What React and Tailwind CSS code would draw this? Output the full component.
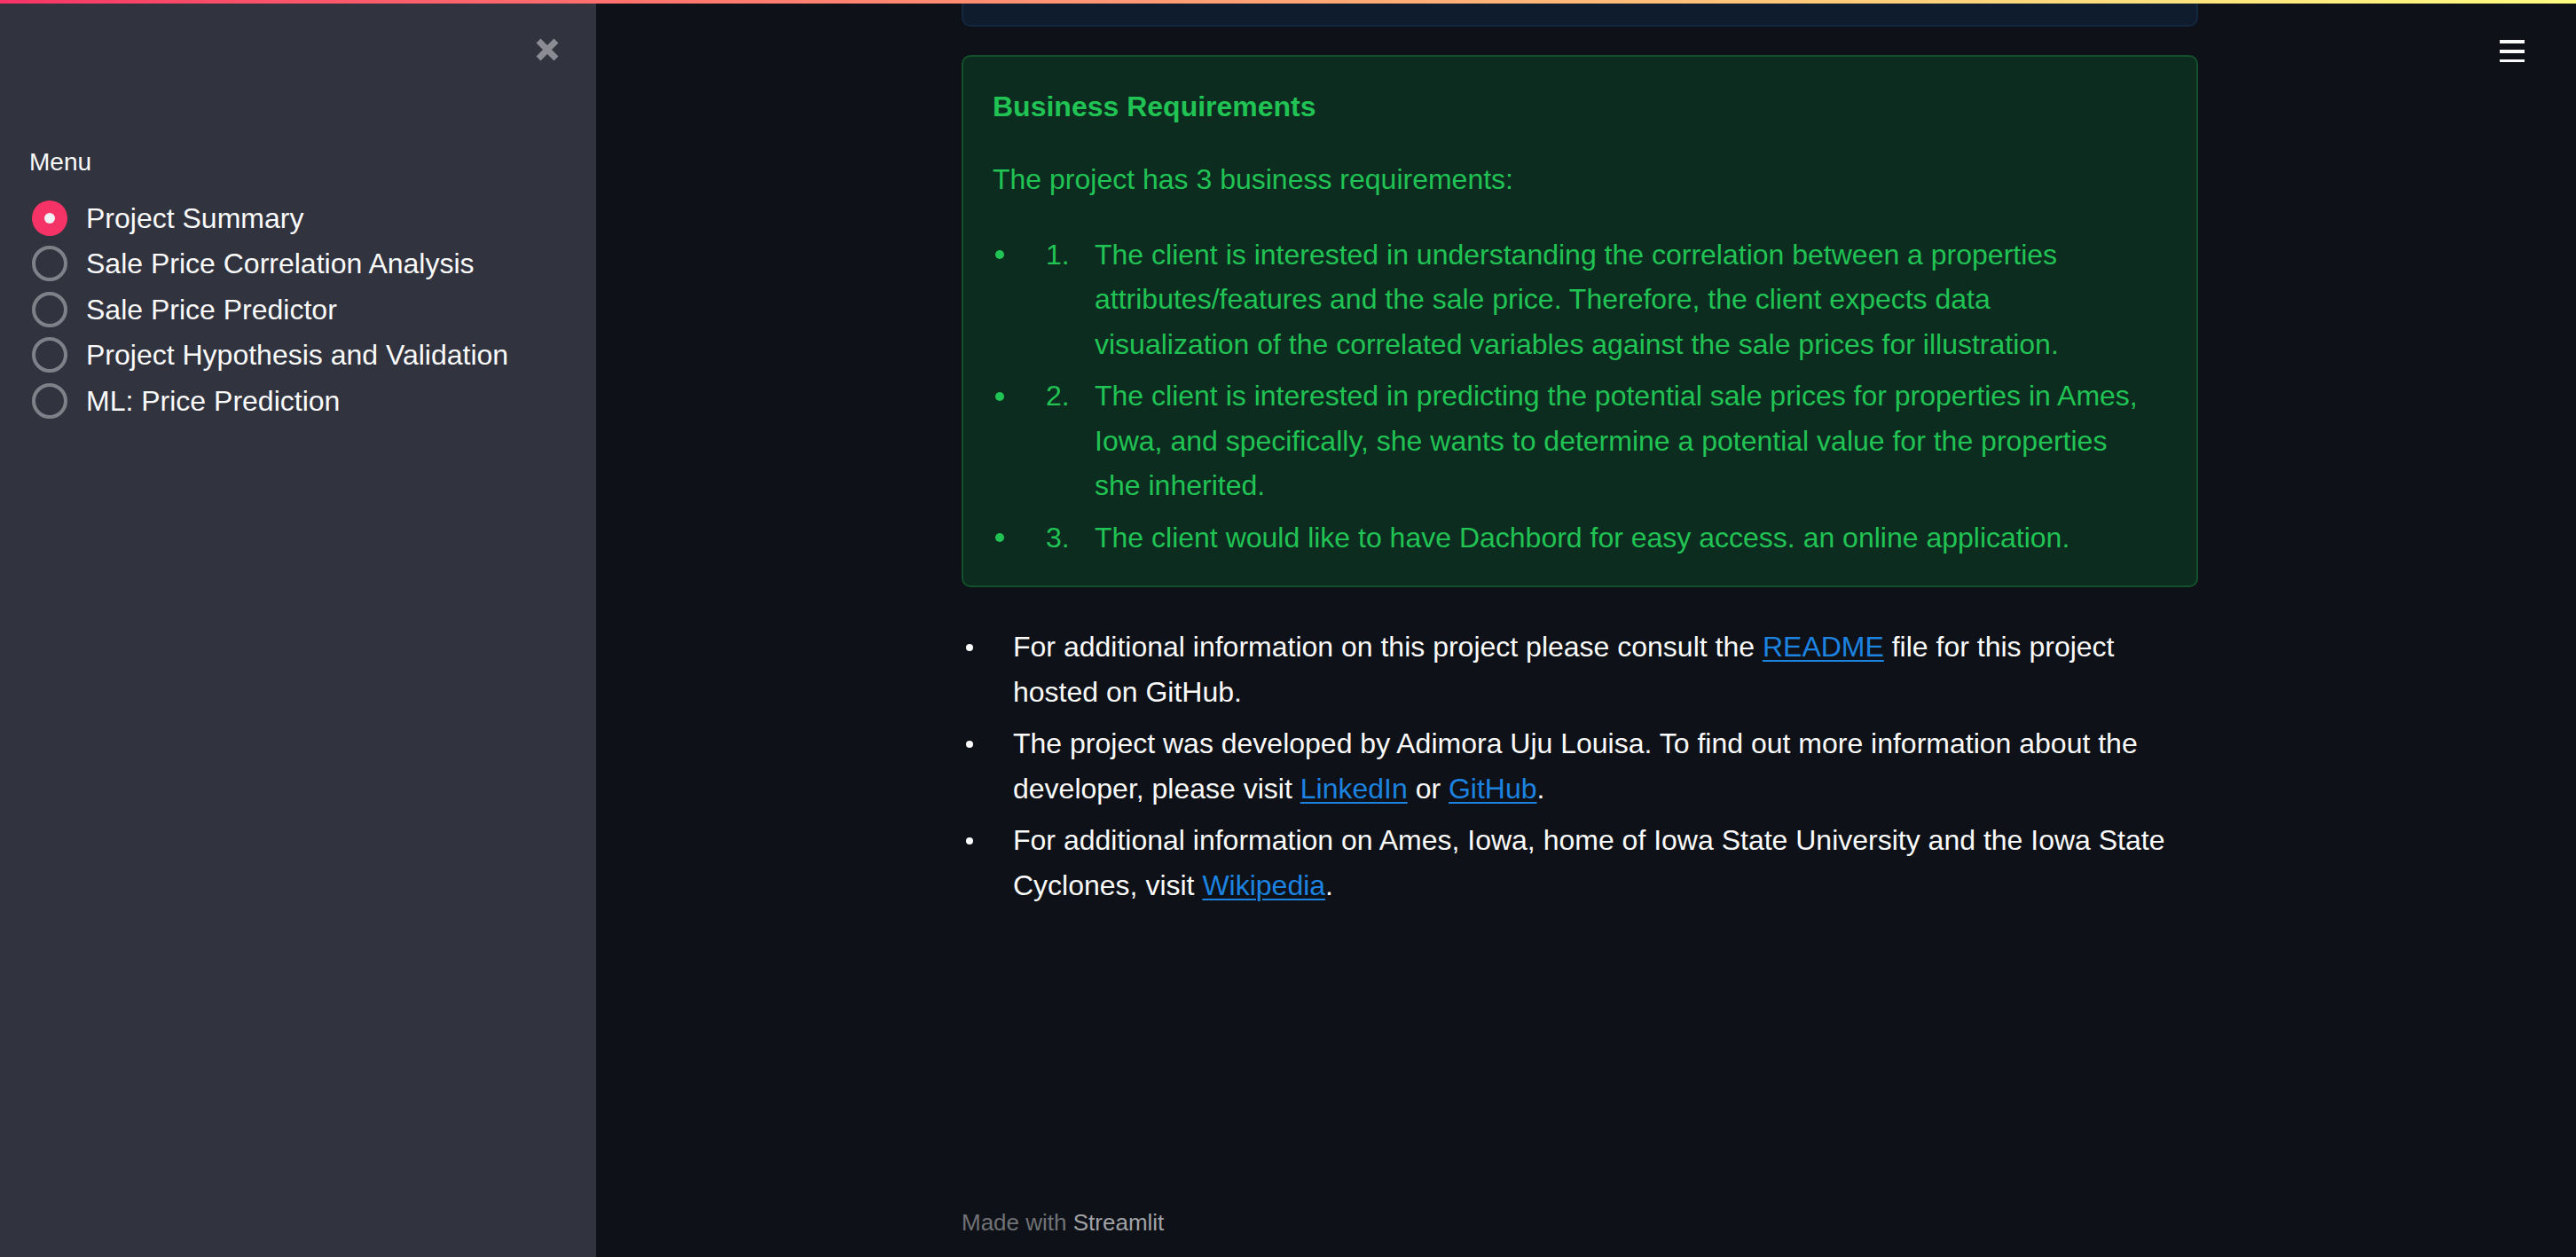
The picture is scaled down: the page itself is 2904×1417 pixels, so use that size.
import React from "react";

const menuItems = [
  "Project Summary",
  "Sale Price Correlation Analysis",
  "Sale Price Predictor",
  "Project Hypothesis and Validation",
  "ML: Price Prediction",
];

const requirements = [
  "The client is interested in understanding the correlation between a properties attributes/features and the sale price. Therefore, the client expects data visualization of the correlated variables against the sale prices for illustration.",
  "The client is interested in predicting the potential sale prices for properties in Ames, Iowa, and specifically, she wants to determine a potential value for the properties she inherited.",
  "The client would like to have Dachbord for easy access. an online application.",
];

function TextLink({ children }) {
  return (
    <a href="#" className="text-[#1c83e1] underline decoration-2 underline-offset-4">
      {children}
    </a>
  );
}

function RadioOption({ label, checked }) {
  return (
    <label className="flex h-[51.5px] items-center gap-[21px]">
      {checked ? (
        <span className="flex h-10 w-10 shrink-0 items-center justify-center rounded-full bg-[#f63366]">
          <span className="h-3 w-3 rounded-full bg-[#f0f2f6]" />
        </span>
      ) : (
        <span className="h-10 w-10 shrink-0 rounded-full border-4 border-[#808188]" />
      )}
      <span className="text-[32px] text-[#fafafa]">{label}</span>
    </label>
  );
}

function Sidebar() {
  return (
    <aside className="flex w-[672px] shrink-0 flex-col bg-[#31333f]">
      <div className="mt-[38px] flex justify-end pr-[41px]">
        <svg width="28" height="28" viewBox="0 0 28 28">
          <path d="M4 4L24 24M24 4L4 24" stroke="#8b8c93" strokeWidth="7" />
        </svg>
      </div>
      <div className="mt-[93px] pl-[33px] text-[28px] leading-[40px] text-[#fafafa]">Menu</div>
      <div className="mt-[17px] flex flex-col pl-[36px]">
        {menuItems.map((item, i) => (
          <RadioOption key={item} label={item} checked={i === 0} />
        ))}
      </div>
    </aside>
  );
}

function Bullet({ width, offset, size, color }) {
  return (
    <span className={`flex h-[50.5px] shrink-0 items-center ${width}`}>
      <span className={`rounded-full ${offset} ${size} ${color}`} />
    </span>
  );
}

export default function App() {
  return (
    <div className="flex h-screen w-full flex-col overflow-hidden bg-[#0e1117] font-['Liberation_Sans',Arial,sans-serif]">
      <div className="h-[4px] shrink-0 bg-linear-to-r from-[#f63366] to-[#fffd80]" />
      <div className="flex min-h-0 flex-1">
        <Sidebar />
        <main className="relative flex min-w-0 flex-1 flex-col">
          <button className="absolute right-[58px] top-[41px]">
            <svg width="28" height="25" viewBox="0 0 28 25" fill="#fafafa">
              <rect y="0" width="28" height="4" />
              <rect y="11" width="28" height="4" />
              <rect y="22" width="28" height="3" />
            </svg>
          </button>

          <div className="ml-[412px] flex w-[1394px] flex-1 flex-col">
            <div className="h-[26px] rounded-b-[10px] border-x-2 border-b-2 border-[#13283f] bg-[#0f1c2d]" />

            <div className="mt-[32px] rounded-[10px] border-2 border-[#13512b] bg-[#0c2c1f] pb-[29px] pl-[33px] pr-[58px] pt-[32px] text-[#21c354]">
              <h3 className="text-[32px] font-bold leading-[48px]">Business Requirements</h3>
              <p className="mt-[32.75px] text-[32px] leading-[50.5px]">The project has 3 business requirements:</p>
              <ul className="mt-[34.5px] flex flex-col gap-2 text-[32px] leading-[50.5px]">
                {requirements.map((text, i) => (
                  <li key={i} className="flex">
                    <Bullet width="w-[60px]" offset="ml-[3px]" size="h-[10px] w-[10px]" color="bg-[#21c354]" />
                    <span className="w-[55px] shrink-0">{i + 1}.</span>
                    <span className="min-w-0 flex-1">{text}</span>
                  </li>
                ))}
              </ul>
            </div>

            <ul className="mt-[42px] flex flex-col gap-2 text-[32px] leading-[50.5px] text-[#fafafa]">
              <li className="flex">
                <Bullet width="w-[58px]" offset="ml-[5px]" size="h-2 w-2" color="bg-[#fafafa]" />
                <span className="min-w-0 flex-1">
                  For additional information on this project please consult the <TextLink>README</TextLink> file for this
                  project hosted on GitHub.
                </span>
              </li>
              <li className="flex">
                <Bullet width="w-[58px]" offset="ml-[5px]" size="h-2 w-2" color="bg-[#fafafa]" />
                <span className="min-w-0 flex-1">
                  The project was developed by Adimora Uju Louisa. To find out more information about the developer, please
                  visit <TextLink>LinkedIn</TextLink> or <TextLink>GitHub</TextLink>.
                </span>
              </li>
              <li className="flex">
                <Bullet width="w-[58px]" offset="ml-[5px]" size="h-2 w-2" color="bg-[#fafafa]" />
                <span className="min-w-0 flex-1">
                  For additional information on Ames, Iowa, home of Iowa State University and the Iowa State Cyclones, visit{" "}
                  <TextLink>Wikipedia</TextLink>.
                </span>
              </li>
            </ul>

            <footer className="mt-auto pb-[21px] text-[26px] leading-[36px] text-[#707176]">
              Made with <span className="text-[#a1a2a6]">Streamlit</span>
            </footer>
          </div>
        </main>
      </div>
    </div>
  );
}
